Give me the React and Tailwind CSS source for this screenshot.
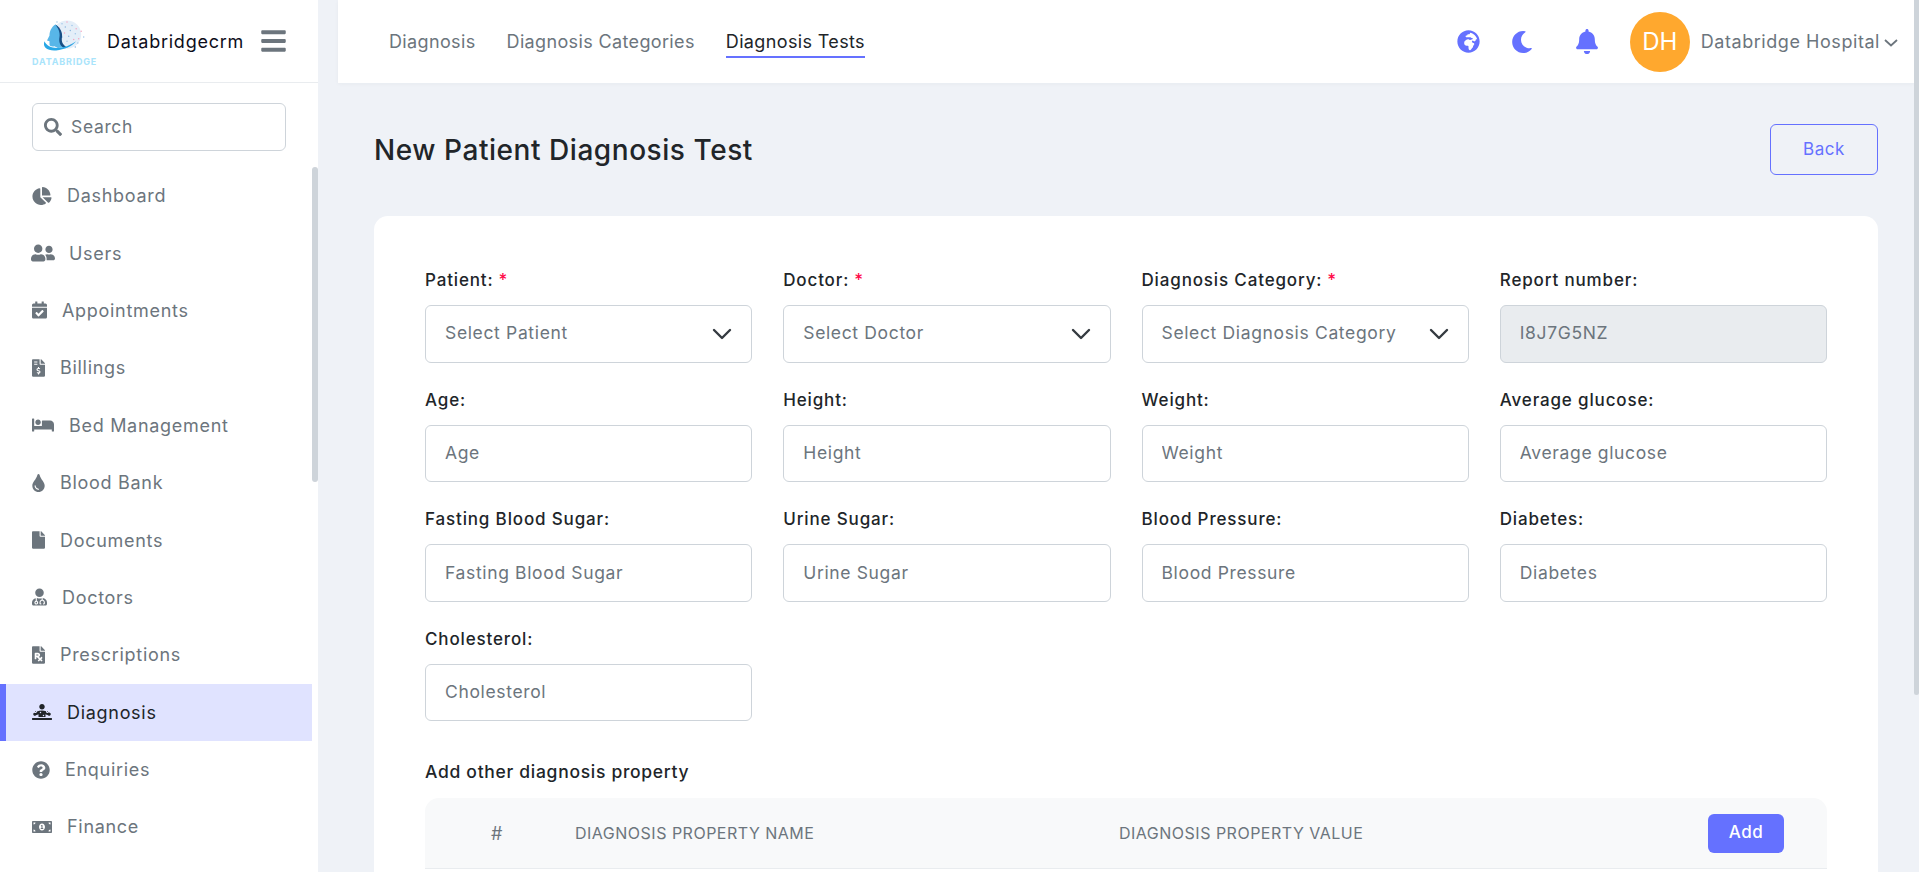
import { FaBars, FaBell, FaBed, FaCalendarCheck, FaChartPie, FaDiagnoses, FaFile, FaFileInvoiceDollar, FaFilePrescription, FaGlobeAfrica, FaMoneyBillAlt, FaMoon, FaQuestionCircle, FaSearch, FaTint, FaUserFriends, FaUserMd } from "react-icons/fa";

const menu = [
    { name: "Dashboard", icon: FaChartPie, w: "w-[20px] h-[18px]" },
    { name: "Users", icon: FaUserFriends, w: "w-[24px] h-[20px] -mx-[1px]" },
    { name: "Appointments", icon: FaCalendarCheck, w: "w-[15px] h-[18px]" },
    { name: "Billings", icon: FaFileInvoiceDollar, w: "w-[13px] h-[18px]" },
    { name: "Bed Management", icon: FaBed, w: "w-[22px] h-[18px]" },
    { name: "Blood Bank", icon: FaTint, w: "w-[13px] h-[18px]" },
    { name: "Documents", icon: FaFile, w: "w-[13px] h-[18px]" },
    { name: "Doctors", icon: FaUserMd, w: "w-[15px] h-[18px]" },
    { name: "Prescriptions", icon: FaFilePrescription, w: "w-[13px] h-[18px]" },
    { name: "Diagnosis", icon: FaDiagnoses, w: "w-[20px] h-[18px]", active: true },
    { name: "Enquiries", icon: FaQuestionCircle, w: "w-[18px] h-[18px]" },
    { name: "Finance", icon: FaMoneyBillAlt, w: "w-[20px] h-[18px]" },
];

const fields = [
    { label: "Patient:", text: "Select Patient", required: true, select: true },
    { label: "Doctor:", text: "Select Doctor", required: true, select: true },
    { label: "Diagnosis Category:", text: "Select Diagnosis Category", required: true, select: true },
    { label: "Report number:", text: "I8J7G5NZ", disabled: true },
    { label: "Age:", text: "Age" },
    { label: "Height:", text: "Height" },
    { label: "Weight:", text: "Weight" },
    { label: "Average glucose:", text: "Average glucose" },
    { label: "Fasting Blood Sugar:", text: "Fasting Blood Sugar" },
    { label: "Urine Sugar:", text: "Urine Sugar" },
    { label: "Blood Pressure:", text: "Blood Pressure" },
    { label: "Diabetes:", text: "Diabetes" },
    { label: "Cholesterol:", text: "Cholesterol" },
];

const dots = [
    [30, 8, "#9fc5e8"], [36, 6, "#f4a6c0"], [42, 10, "#9fc5e8"], [47, 14, "#f4a6c0"], [27, 13, "#f4a6c0"],
    [34, 12, "#8db8e0"], [40, 16, "#8db8e0"], [46, 20, "#9fc5e8"], [50, 26, "#f4a6c0"], [33, 19, "#f4a6c0"],
    [38, 23, "#8db8e0"], [44, 27, "#f4a6c0"], [49, 31, "#9fc5e8"], [36, 29, "#9fc5e8"], [41, 33, "#f4a6c0"],
    [46, 36, "#8db8e0"], [30, 24, "#8db8e0"], [53, 17, "#f4a6c0"], [24, 6, "#9fc5e8"], [56, 24, "#9fc5e8"],
];

function Logo() {
    return (
        <div className="relative w-[60px] h-[58px]">
            <svg viewBox="-6 -6 72 55" className="w-[60px] h-[46px]">
                <circle cx="36" cy="21" r="17" fill="#e4eef8" />
                {dots.map((d, i) => (
                    <circle key={i} cx={d[0]} cy={d[1]} r="0.9" fill={d[2]} />
                ))}
                <path d="M22 9c-5 3-7 9-7 13l-3 6 3 1v4c0 2 3 3 6 2l4 2 9-1c-5-3-6-7-5-12 1-6-2-12-7-15z" fill="#58b6e8" />
                <path d="M22 9c5 3 9 9 8 15-1 6 1 9 5 12l-3 1c-5-3-6-8-5-13 1-6-2-11-5-15z" fill="#174f86" />
                <path d="M9 29c-3 7 4 12 14 11 10-1 19-5 24-11-7 5-15 8-23 8-7 0-13-3-15-8z" fill="#28a7e6" />
            </svg>
            <div className="-mt-[2px] font-[Inter,sans-serif] font-bold text-[9px] leading-[12px] tracking-[0.8px] text-[#a9e4fb] text-center">DATABRIDGE</div>
        </div>
    );
}

function Sidebar() {
    return (
        <div className="relative w-[318px] h-full shrink-0 bg-white flex flex-col overflow-hidden">
            <div className="flex items-center h-[83px] shrink-0 border-b border-[#e9ecef] pl-8 pr-8">
                <Logo />
                <span className="ml-[15px] text-[18px] tracking-[0.75px] text-[#0d0d1a]">Databridgecrm</span>
                <FaBars className="ml-auto w-[25px] h-[28px] text-[#6c757d]" />
            </div>
            <div className="mx-8 mt-5 h-12 shrink-0 border border-[#ced4da] rounded-md flex items-center pl-[11px]">
                <FaSearch className="w-[18px] h-[18px] text-[#6c757d] shrink-0" />
                <input placeholder="Search" className="ml-[9px] w-40 pt-[1px] outline-none text-[17.5px] tracking-[0.65px] placeholder:text-[#6c757d]" />
            </div>
            <div className="mt-[16px] mr-[6px]">
                {menu.map((m) => {
                    const Icon = m.icon;
                    return (
                        <div key={m.name} className={`flex items-center h-[57.4px] pl-8 ${m.active ? "bg-[#e0e3ff] text-[#212529] border-l-[6px] border-[#6571ff] pl-[26px]" : "text-[#6c757d]"}`}>
                            <Icon className={`${m.w} shrink-0`} />
                            <span className="ml-[15px] text-[18px] tracking-[0.7px]">{m.name}</span>
                        </div>
                    );
                })}
            </div>
            <div className="absolute right-0 top-[167px] w-[6px] h-[315px] rounded-full bg-[#ced4da]"></div>
        </div>
    );
}

function Topbar() {
    return (
        <div className="flex items-center h-[83px] shrink-0 bg-white pl-[51px] pr-4 shadow-[0_1px_4px_rgba(30,40,60,0.04)]">
            <div className="flex items-center gap-[31px] text-[18px] tracking-[0.36px] text-[#6c757d]">
                <span>Diagnosis</span>
                <span>Diagnosis Categories</span>
                <span className="relative text-[#212529]">
                    Diagnosis Tests
                    <span className="absolute left-0 right-0 top-[28px] h-[2px] bg-[#6571ff]"></span>
                </span>
            </div>
            <div className="ml-auto flex items-center text-[#6571ff]">
                <FaGlobeAfrica className="w-[23px] h-[23px]" />
                <FaMoon className="ml-[31px] w-[22px] h-[22px]" />
                <FaBell className="ml-[43px] w-[22px] h-[25px]" />
                <div className="ml-[32px] w-[60px] h-[60px] rounded-full bg-[#ffa82e] text-white flex items-center justify-center text-[24px]">DH</div>
                <span className="ml-[11px] text-[18px] tracking-[0.55px] text-[#6c757d]">Databridge Hospital</span>
                <svg viewBox="0 0 14 8" className="ml-[4px] w-[14px] h-[8px] mt-[2px]" fill="none" stroke="#6c757d" strokeWidth="1.8">
                    <path d="M1 1l6 5.5L13 1" />
                </svg>
            </div>
        </div>
    );
}

function Field({ f }) {
    return (
        <div>
            <div className="h-6 leading-6 mb-[13px] text-[17px] tracking-[0.85px] font-medium text-[#212529]">
                {f.label}
                {f.required && <span className="ml-[5px] text-[#ff0a4a]">*</span>}
            </div>
            {f.select ? (
                <div className="h-[57.5px] border border-[#ced4da] rounded-md bg-white pl-[19px] pr-[19px] flex items-center justify-between text-[17.5px] tracking-[0.65px] text-[#6c757d]">
                    <span className="-mt-[1px]">{f.text}</span>
                    <svg viewBox="0 0 20 12" className="w-5 h-3" fill="none" stroke="#343a40" strokeWidth="2.4" strokeLinecap="round" strokeLinejoin="round">
                        <path d="M2 2l8 8 8-8" />
                    </svg>
                </div>
            ) : f.disabled ? (
                <div className="h-[57.5px] border border-[#ced4da] rounded-md bg-[#e9ecef] pl-[19px] pb-[1px] flex items-center text-[17.5px] tracking-[0.65px] text-[#6c757d]">{f.text}</div>
            ) : (
                <input placeholder={f.text} className="w-full h-[57.5px] border border-[#ced4da] rounded-md bg-white pl-[19px] pb-[1px] outline-none text-[17.5px] tracking-[0.65px] placeholder:text-[#6c757d]" />
            )}
        </div>
    );
}

export default function App() {
    return (
        <div className="relative flex w-full h-screen overflow-hidden bg-[#eff2f7] font-[Inter,sans-serif]">
            <Sidebar />
            <div className="flex flex-col flex-1 min-w-0 ml-5 mr-[5px]">
                <Topbar />
                <div className="px-9">
                    <div className="flex items-center justify-between mt-[41px] h-[51px]">
                        <h1 className="text-[28px] tracking-[0.55px] font-medium text-[#212529]">New Patient Diagnosis Test</h1>
                        <button className="w-[108px] h-[51px] border border-[#6571ff] rounded-md text-[17px] tracking-[0.6px] text-[#6571ff]">Back</button>
                    </div>
                    <div className="mt-[41px] bg-white rounded-[14px] pt-[52px] pl-[51px] pr-[51px] pb-10">
                        <div className="grid grid-cols-4 gap-x-[31px] gap-y-[25px]">
                            {fields.map((f) => (
                                <Field key={f.label} f={f} />
                            ))}
                        </div>
                        <div className="mt-[39px] mb-[14px] h-6 leading-6 text-[17.5px] tracking-[0.7px] font-medium text-[#212529]">Add other diagnosis property</div>
                        <div className="flex items-center h-[71px] bg-[#f8f9fa] border-b border-[#e9ecef] rounded-t-[14px] text-[16px] tracking-[0.5px] text-[#6c757d]">
                            <span className="ml-[66px] w-[84px] text-[18px]">#</span>
                            <span className="w-[544px]">DIAGNOSIS PROPERTY NAME</span>
                            <span>DIAGNOSIS PROPERTY VALUE</span>
                            <button className="ml-auto mr-[43px] w-[76px] h-[39px] bg-[#6571ff] rounded-md text-[17px] font-medium text-white">Add</button>
                        </div>
                    </div>
                </div>
            </div>
            <div className="absolute right-0 top-0 w-[5px] h-[695px] rounded-b-full bg-[#ced4da]"></div>
        </div>
    );
}
